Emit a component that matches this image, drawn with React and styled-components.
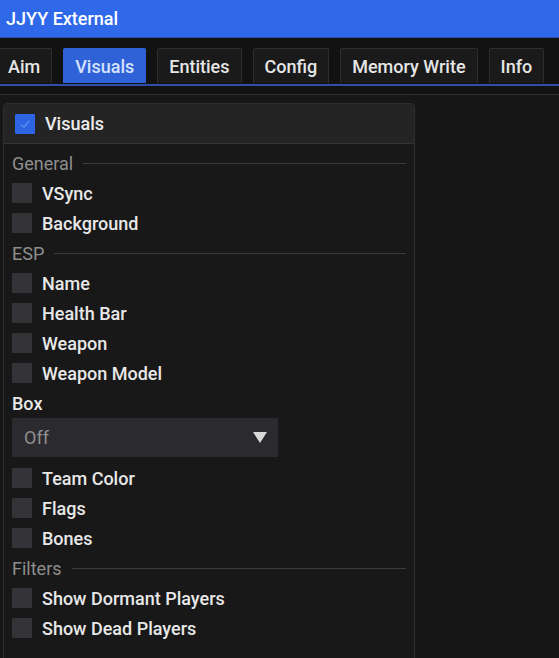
import React from "react";
import styled, { createGlobalStyle } from "styled-components";

const Global = createGlobalStyle`
  html, body { margin: 0; padding: 0; background: #161616; }
  body { font-family: Roboto, "Noto Sans", "Liberation Sans", sans-serif; overflow: hidden; }
  * { box-sizing: border-box; }
`;

const Page = styled.div`
  width: 559px;
  height: 658px;
  background: #171717;
  display: flex;
  flex-direction: column;
  overflow: hidden;
`;

const TitleBar = styled.div`
  height: 38px;
  flex: none;
  background: #2f68e8;
  color: #fff;
  font-size: 18px;
  font-weight: 500;
  display: flex;
  align-items: center;
  padding-left: 6px;
  border-bottom: 1px solid #2a4fb0;
`;

const TabArea = styled.div`
  flex: none;
  background: #121212;
  padding-top: 10px;
  border-bottom: 1px solid #2c2c2c;
`;

const TabRow = styled.div`
  display: flex;
  gap: 11px;
  margin-left: -4px;
  height: 35px;
  align-items: stretch;
`;

const Tab = styled.div`
  padding: 0 11px;
  display: flex;
  align-items: center;
  font-size: 18px;
  font-weight: 500;
  white-space: nowrap;
  color: ${(p) => (p.$active ? "#d6e2ff" : "#e6e6e6")};
  background: ${(p) => (p.$active ? "#2f62d6" : "#1a1a1a")};
  border: 1px solid ${(p) => (p.$active ? "#2f62d6" : "#2e2e2e")};
  border-bottom: none;
  border-radius: 2px 2px 0 0;
`;

const TabUnderline = styled.div`
  height: 2px;
  background: #2f4fa8;
  margin-top: 1px;
`;

const TabGap = styled.div`
  height: 8px;
`;

const Content = styled.div`
  flex: 1;
  padding: 8px 0 0 3px;
`;

const Panel = styled.div`
  width: 412px;
  border: 1px solid #2e2e2e;
  border-radius: 4px;
  background: #181818;
  display: flex;
  flex-direction: column;
`;

const PanelHeader = styled.div`
  height: 40px;
  background: #242424;
  border-bottom: 1px solid #343434;
  border-radius: 4px 4px 0 0;
  display: flex;
  align-items: center;
  padding-left: 11px;
  gap: 10px;
  font-size: 18px;
  font-weight: 500;
  color: #ececec;
`;

const Body = styled.div`
  padding: 4px 8px 20px 8px;
  display: flex;
  flex-direction: column;
`;

const Box = styled.span`
  width: 20px;
  height: 20px;
  flex: none;
  border-radius: 1px;
  background: ${(p) => (p.$checked ? "#2f65e4" : "#333338")};
  display: flex;
  align-items: center;
  justify-content: center;
`;

const Row = styled.div`
  height: 30px;
  display: flex;
  align-items: center;
  gap: 10px;
  font-size: 18px;
  font-weight: 500;
  color: #e8e8e8;
  white-space: nowrap;
`;

const Section = styled.div`
  height: 30px;
  display: flex;
  align-items: center;
  gap: 10px;
  font-size: 18px;
  color: #8e8e8e;
  &::after {
    content: "";
    flex: 1;
    height: 1px;
    background: #3a3a3a;
  }
`;

const Label = styled.div`
  height: 30px;
  display: flex;
  align-items: center;
  font-size: 18px;
  font-weight: 500;
  color: #e8e8e8;
`;

const Select = styled.div`
  width: 266px;
  height: 39px;
  margin: 0 0 6px 0;
  background: #2b2b2f;
  border-radius: 1px;
  display: flex;
  align-items: center;
  justify-content: space-between;
  padding: 0 10px 0 12px;
  font-size: 18px;
  color: #8e8e8e;
`;

const Check = ({ checked }) => (
  <Box $checked={checked}>
    {checked && (
      <svg width="14" height="14" viewBox="0 0 14 14">
        <path d="M3 7.5 L6 10 L11 4" fill="none" stroke="#5b88f0" strokeWidth="1.6" />
      </svg>
    )}
  </Box>
);

const Item = ({ children }) => (
  <Row>
    <Check />
    {children}
  </Row>
);

export default function App() {
  const tabs = ["Aim", "Visuals", "Entities", "Config", "Memory Write", "Info"];
  return (
    <Page>
      <Global />
      <TitleBar>JJYY External</TitleBar>
      <TabArea>
        <TabRow>
          {tabs.map((t) => (
            <Tab key={t} $active={t === "Visuals"}>
              {t}
            </Tab>
          ))}
        </TabRow>
        <TabUnderline />
        <TabGap />
      </TabArea>
      <Content>
        <Panel>
          <PanelHeader>
            <Check checked />
            Visuals
          </PanelHeader>
          <Body>
            <Section>General</Section>
            <Item>VSync</Item>
            <Item>Background</Item>
            <Section>ESP</Section>
            <Item>Name</Item>
            <Item>Health Bar</Item>
            <Item>Weapon</Item>
            <Item>Weapon Model</Item>
            <Label>Box</Label>
            <Select>
              Off
              <svg width="16" height="13" viewBox="0 0 16 13">
                <path d="M1 1 L15 1 L8 12 Z" fill="#d8d8d8" />
              </svg>
            </Select>
            <Item>Team Color</Item>
            <Item>Flags</Item>
            <Item>Bones</Item>
            <Section>Filters</Section>
            <Item>Show Dormant Players</Item>
            <Item>Show Dead Players</Item>
          </Body>
        </Panel>
      </Content>
    </Page>
  );
}
